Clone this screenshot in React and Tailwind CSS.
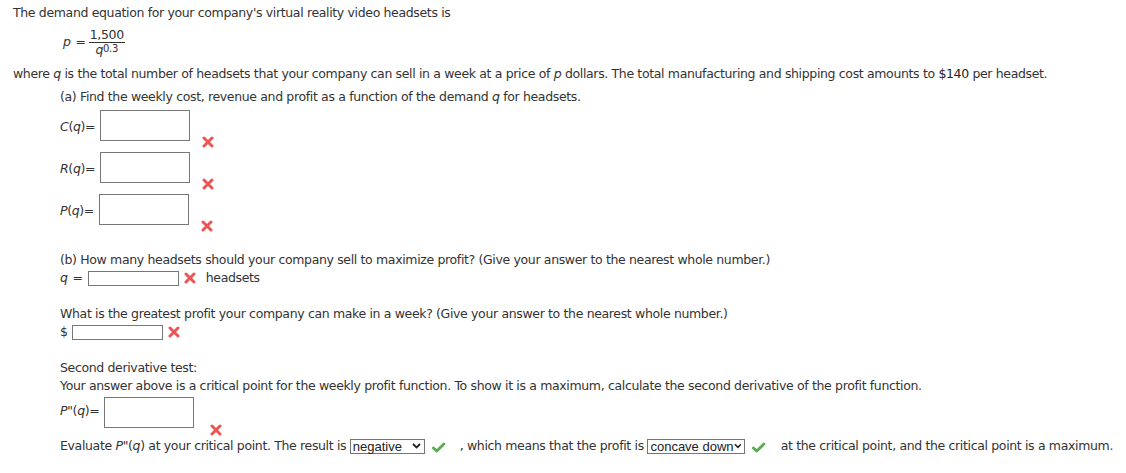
import React from "react";

const Wrong = ({ className = "" }) => (
  <svg width="12" height="12" viewBox="0 0 12 12" className={className}>
    <path d="M2 2 L10 10 M10 2 L2 10" stroke="#ee5454" strokeWidth="3" strokeLinecap="round" />
  </svg>
);

const Right = ({ className = "" }) => (
  <svg width="14" height="11" viewBox="0 0 14 11" className={className}>
    <path d="M1.5 6 L5 9.2 L12.5 1.8" stroke="#5aad4e" strokeWidth="3" fill="none" strokeLinecap="round" strokeLinejoin="round" />
  </svg>
);

const Chevron = () => (
  <svg width="9" height="6" viewBox="0 0 9 6">
    <path d="M1 1 L4.5 4.5 L8 1" stroke="#222" strokeWidth="1.8" fill="none" />
  </svg>
);

function Dropdown({ value, width }) {
  return (
    <span
      className={`inline-flex items-center justify-between h-[15px] border border-[#767676] bg-white pl-[2px] pr-[3px] tracking-normal ${width}`}
      style={{ fontFamily: '"Liberation Sans", Arial, sans-serif' }}
    >
      <span className="text-[13px] leading-none text-[#222]">{value}</span>
      <Chevron />
    </span>
  );
}

function BigInput({ label, box = "", mark = "ml-[12px]" }) {
  return (
    <div className="flex items-start h-[42px]">
      <span className="mt-[8px] w-[40px]">{label}</span>
      <div className={`w-[90px] h-[31px] border border-[#777] bg-white ${box}`} />
      <Wrong className={`mt-[26px] ${mark}`} />
    </div>
  );
}

export default function App() {
  return (
    <div
      className="bg-white text-[#333] text-[12.5px] tracking-[-0.35px] leading-[18px] px-[13px] pt-[4px] w-[1126px] h-[473px]"
      style={{ fontFamily: '"DejaVu Sans", Verdana, sans-serif' }}
    >
      <div className="h-[18px]">The demand equation for your company's virtual reality video headsets is</div>

      <div className="h-[43px] flex items-center pl-[50px] pb-[4px]">
        <span className="italic mr-[5px]">p</span>
        <span className="mr-[3px]">=</span>
        <span className="inline-flex flex-col items-center">
          <span className="border-b border-[#333] px-[1px] leading-[15px]">1,500</span>
          <span className="leading-[14px]">
            <span className="italic">q</span>
            <sup className="text-[10px] relative -top-[2px]">0.3</sup>
          </span>
        </span>
      </div>

      <div className="h-[18px] whitespace-nowrap">
        where <span className="italic">q</span> is the total number of headsets that your company can sell in a week at a price of <span className="italic">p</span> dollars. The total manufacturing and shipping cost amounts to <span className="text-[#222]">$140</span> per headset.
      </div>

      <div className="ml-[47px]">
        <div className="h-[23px] pt-[5px]">(a) Find the weekly cost, revenue and profit as a function of the demand <span className="italic">q</span> for headsets.</div>

        <div className="mt-[4px]">
          <BigInput label={<><span className="italic">C</span>(<span className="italic">q</span>)=</>} />
          <BigInput label={<><span className="italic">R</span>(<span className="italic">q</span>)=</>} />
          <BigInput label={<><span className="italic">P</span>(<span className="italic">q</span>)=</>} box="-ml-[1px]" />
        </div>

        <div className="mt-[15px] h-[18px]">(b) How many headsets should your company sell to maximize profit? (Give your answer to the nearest whole number.)</div>
        <div className="h-[18px] flex items-center">
          <span className="italic">q</span>
          <span className="ml-[5px]">=</span>
          <span className="ml-[5px] w-[91px] h-[15px] border border-[#777] bg-white" />
          <Wrong className="ml-[5px]" />
          <span className="ml-[10px]">headsets</span>
        </div>

        <div className="mt-[18px] h-[18px]">What is the greatest profit your company can make in a week? (Give your answer to the nearest whole number.)</div>
        <div className="h-[18px] flex items-center">
          <span>$</span>
          <span className="ml-[4px] w-[91px] h-[15px] border border-[#777] bg-white" />
          <Wrong className="ml-[5px]" />
        </div>

        <div className="mt-[18px] h-[18px]">Second derivative test:</div>
        <div className="h-[18px]">Your answer above is a critical point for the weekly profit function. To show it is a maximum, calculate the second derivative of the profit function.</div>

        <div className="flex items-start h-[40px] mt-[2px]">
          <span className="mt-[5px] w-[44px]"><span className="italic">P</span>"(<span className="italic">q</span>)=</span>
          <div className="w-[90px] h-[31px] border border-[#777] bg-white" />
          <Wrong className="mt-[27px] ml-[16px]" />
        </div>

        <div className="h-[18px] flex items-center whitespace-pre">
          <span>Evaluate <span className="italic">P</span>"(<span className="italic">q</span>) at your critical point. The result is </span>
          <Dropdown value="negative" width="w-[79px]" />
          <Right className="ml-[7px] mt-[3px]" />
          <span className="ml-[14px]">, which means that the profit is </span>
          <Dropdown value="concave down" width="w-[98px]" />
          <Right className="ml-[7px] mt-[3px]" />
          <span className="ml-[15px]">at the critical point, and the critical point is a maximum.</span>
        </div>
      </div>
    </div>
  );
}
